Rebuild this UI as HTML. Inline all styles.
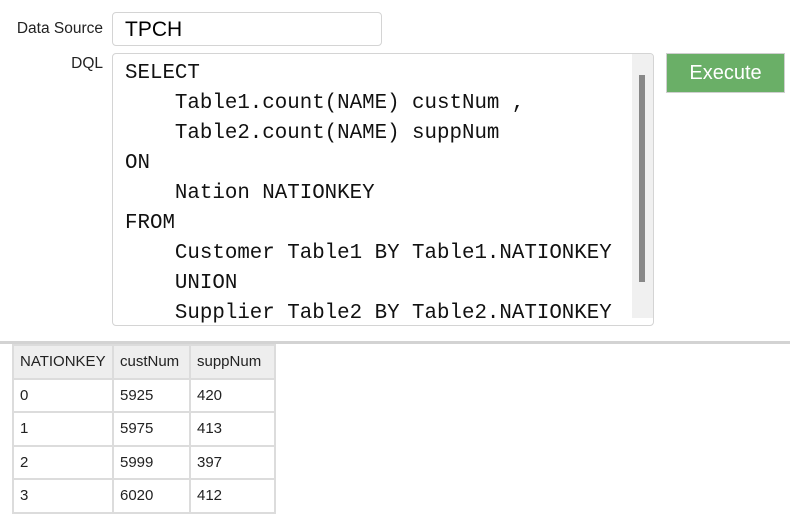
<!DOCTYPE html>
<html><head><style>
body{margin:0;width:790px;height:500px;background:#fff;font-family:"Liberation Sans",sans-serif;position:relative;overflow:hidden}
.abs{position:absolute}
.lbl{font-size:15.5px;color:#222;text-align:right}
.ds{left:112px;top:12px;border:1px solid #d4d4d4;border-radius:4px;font-size:21px;line-height:34px;padding-left:12px;box-sizing:border-box;width:270px;height:34px;color:#000}
.ta{left:112px;top:53px;width:542px;height:273px;border:1px solid #d4d4d4;border-radius:4px;box-sizing:border-box;overflow:hidden}
pre{margin:0;position:absolute;left:12px;top:5px;font-family:"Liberation Mono",monospace;font-size:20.8px;line-height:30px;color:#111}
.sb{right:0;top:0;width:21px;height:264px;background:#f0f0f0}
.th{left:7px;top:21px;width:6px;height:207px;background:#888}
.btn{left:666px;top:53px;width:119px;height:40px;background:#6aaf67;border:1px solid #cfcfcf;box-sizing:border-box;color:#fff;font-size:20px;text-align:center;line-height:38px}
.sep{left:0;top:341px;width:790px;height:3px;background:#d3d3d3}
table{position:absolute;left:12px;top:344px;border-collapse:collapse;font-size:15px;color:#222}
td,th{border:2px solid #dcdcdc;padding:0 6px;height:31.5px;text-align:left;font-weight:normal}
th{background:#eee}
</style></head><body>
<div class="abs lbl" style="left:0;top:20px;width:103px">Data Source</div>
<div class="abs lbl" style="left:0;top:55px;width:103px">DQL</div>
<div class="abs ds">TPCH</div>
<div class="abs ta"><pre>SELECT
    Table1.count(NAME) custNum ,
    Table2.count(NAME) suppNum
ON
    Nation NATIONKEY
FROM
    Customer Table1 BY Table1.NATIONKEY
    UNION
    Supplier Table2 BY Table2.NATIONKEY</pre>
<div class="abs sb"><div class="abs th"></div></div></div>
<div class="abs btn">Execute</div>
<div class="abs sep"></div>
<table>
<tr><th style="width:86px">NATIONKEY</th><th style="width:63px">custNum</th><th style="width:71px">suppNum</th></tr>
<tr><td>0</td><td>5925</td><td>420</td></tr>
<tr><td>1</td><td>5975</td><td>413</td></tr>
<tr><td>2</td><td>5999</td><td>397</td></tr>
<tr><td>3</td><td>6020</td><td>412</td></tr>
</table>
</body></html>
